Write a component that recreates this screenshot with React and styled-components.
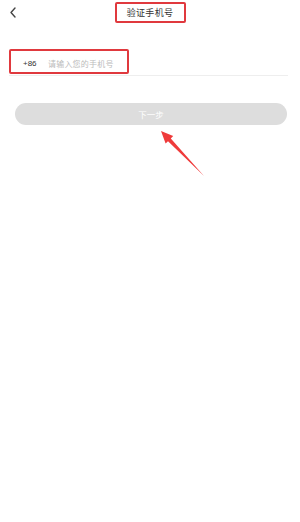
import React from 'react';
import styled, { createGlobalStyle } from 'styled-components';

const GlobalStyle = createGlobalStyle`
  html, body {
    margin: 0;
    padding: 0;
    background: #fff;
  }
  body {
    font-family: "Noto Sans CJK SC", "Noto Sans", sans-serif;
  }
`;

const Page = styled.div`
  position: relative;
  width: 300px;
  height: 522px;
  background: #fff;
  overflow: hidden;
`;

const Header = styled.div`
  position: relative;
  height: 22px;
  display: flex;
  align-items: center;
  justify-content: center;
  padding-top: 1px;
`;

const BackButton = styled.div`
  position: absolute;
  left: 8px;
  top: 6px;
  width: 10px;
  height: 12px;
  display: flex;
  align-items: center;
  justify-content: center;
`;

const Title = styled.div`
  width: 67px;
  height: 17px;
  border: 2px solid #e0393e;
  border-radius: 2px;
  display: flex;
  align-items: center;
  justify-content: center;
  font-size: 9px;
  color: #333;
  letter-spacing: 0.3px;
`;

const PhoneRow = styled.div`
  margin: 26px 12px 0 9px;
  border-bottom: 1px solid #eee;
  padding-bottom: 1px;
`;

const Highlight = styled.div`
  width: 116px;
  height: 18px;
  border: 2px solid #e0393e;
  border-radius: 2px;
  display: flex;
  align-items: center;
  padding-top: 3px;
`;

const Prefix = styled.span`
  font-family: "Liberation Sans", Arial, sans-serif;
  font-size: 8px;
  color: #333;
  margin-left: 12px;
  width: 25px;
`;

const Placeholder = styled.span`
  font-size: 8px;
  color: #bbb;
  letter-spacing: 0.2px;
`;

const NextButton = styled.div`
  margin: 27px 13px 0 15px;
  height: 22px;
  border-radius: 11px;
  background: #dddddd;
  color: #fff;
  font-size: 8.5px;
  display: flex;
  align-items: center;
  justify-content: center;
`;

const Arrow = styled.svg`
  position: absolute;
  left: 155px;
  top: 125px;
`;

export default function App() {
  return (
    <Page>
      <GlobalStyle />
      <Header>
        <BackButton>
          <svg width="8" height="11" viewBox="0 0 8 11">
            <path d="M6 1 L2 5.5 L6 10" fill="none" stroke="#444" strokeWidth="1.4" strokeLinecap="round" strokeLinejoin="round" />
          </svg>
        </BackButton>
        <Title>验证手机号</Title>
      </Header>
      <PhoneRow>
        <Highlight>
          <Prefix>+86</Prefix>
          <Placeholder>请输入您的手机号</Placeholder>
        </Highlight>
      </PhoneRow>
      <NextButton>下一步</NextButton>
      <Arrow width="55" height="55" viewBox="0 0 55 55">
        <path d="M6 6 L18.2 11 L15.8 13.4 L49 51 L13 16.2 L10.6 18.6 Z" fill="#ef3b3b" />
      </Arrow>
    </Page>
  );
}
